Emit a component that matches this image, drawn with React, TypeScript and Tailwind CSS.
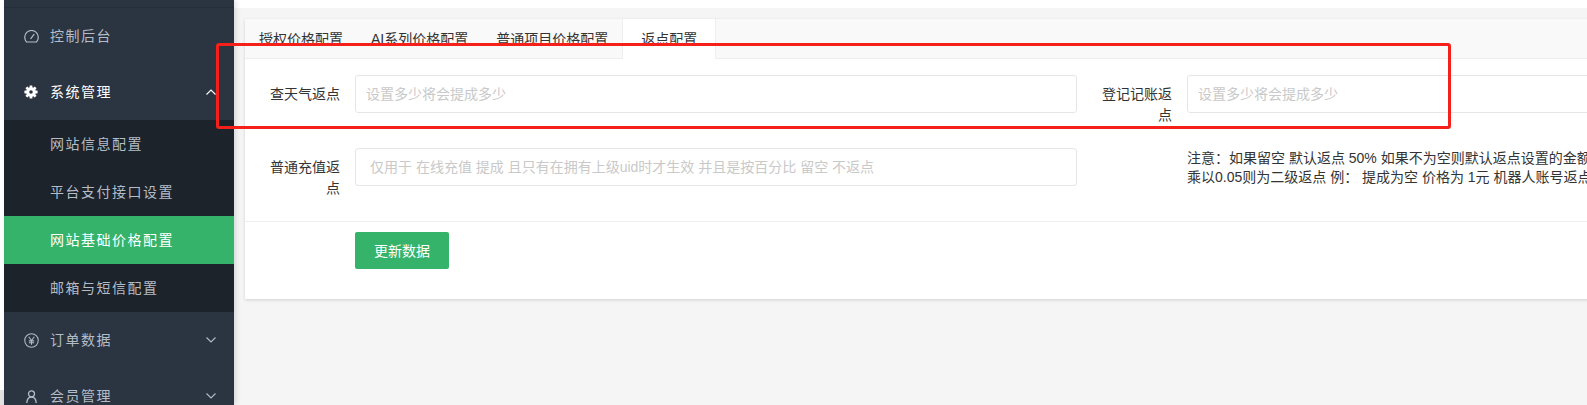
import React from "react";

const font = "font-['Liberation_Sans','Noto_Sans_CJK_SC',sans-serif]";

function Gauge() {
  return (
    <svg width="15" height="13" viewBox="0 0 15 13" fill="none" stroke="currentColor" strokeWidth="1.2" strokeLinecap="round">
      <path d="M2.6 12 A6.8 6.8 0 1 1 12.4 12 Z" />
      <path d="M6.8 8.6 L10 4.4" />
    </svg>
  );
}
function Gear() {
  const teeth = [0, 45, 90, 135, 180, 225, 270, 315];
  return (
    <svg width="14" height="14" viewBox="0 0 14 14" fill="currentColor">
      {teeth.map((a) => (
        <rect key={a} x="5.6" y="0.4" width="2.8" height="3" rx="0.4" transform={`rotate(${a} 7 7)`} />
      ))}
      <path fillRule="evenodd" d="M7 2.2a4.8 4.8 0 1 1 0 9.6a4.8 4.8 0 1 1 0-9.6ZM7 5.2a1.8 1.8 0 1 0 0 3.6a1.8 1.8 0 1 0 0-3.6Z" />
    </svg>
  );
}
function Yen() {
  return (
    <svg width="15" height="15" viewBox="0 0 16 16" fill="none" stroke="currentColor" strokeWidth="1.1">
      <circle cx="8" cy="8" r="7.2" />
      <path d="M5 4 L8 8 L11 4 M8 8 V12.5 M5.2 8.4 H10.8 M5.2 10.4 H10.8" />
    </svg>
  );
}
function UserIcon() {
  return (
    <svg width="11" height="13" viewBox="0 0 11 13" fill="none" stroke="currentColor" strokeWidth="1.3">
      <circle cx="5.5" cy="3.8" r="3" />
      <path d="M0.8 13 C1 9.5 2.6 7 5.5 7 C8.4 7 10 9.5 10.2 13" />
    </svg>
  );
}
function Chevron({ up }: { up?: boolean }) {
  return (
    <svg width="10" height="6" viewBox="0 0 10 6" fill="none" stroke="currentColor" strokeWidth="1.1" className="ml-auto">
      <path d={up ? "M0.5 5.5 L5 1 L9.5 5.5" : "M0.5 0.5 L5 5 L9.5 0.5"} />
    </svg>
  );
}

function MainItem({ icon, label, up, active, noArrow }: { icon: React.ReactNode; label: string; up?: boolean; active?: boolean; noArrow?: boolean }) {
  return (
    <div className={`h-14 flex items-center pl-4 pr-[18px] text-sm tracking-[1.5px] ${active ? "text-white" : "text-[#b4bcc8]"}`}>
      <span className="w-[22px] mr-2 flex justify-center shrink-0">{icon}</span>
      <span>{label}</span>
      {!noArrow && <Chevron up={up} />}
    </div>
  );
}
function SubItem({ label, active }: { label: string; active?: boolean }) {
  return (
    <div className={`h-12 flex items-center pl-[46px] text-sm tracking-[1.5px] ${active ? "bg-[#36b36b] text-white" : "text-[#b4bcc8]"}`}>
      {label}
    </div>
  );
}

function Label({ children }: { children: React.ReactNode }) {
  return (
    <label className="w-[80px] ml-[15px] mr-[15px] shrink-0 text-right text-sm leading-[21px] text-[#333] pt-[9px]">{children}</label>
  );
}
function Field({ placeholder, wide }: { placeholder: string; wide?: boolean }) {
  return (
    <input
      readOnly
      placeholder={placeholder}
      className={`w-[722px] h-[38px] shrink-0 border border-[#e6e6e6] rounded-[3px] bg-white pr-[10px] text-sm placeholder:text-[#c9c9c9] outline-none ${wide ? "pl-[14px]" : "pl-[10px]"}`}
    />
  );
}

export default function App() {
  return (
    <div className={`${font} w-[1587px] h-[405px] overflow-hidden flex bg-white`}>
      <div className="w-1 shrink-0 flex flex-col">
        <div className="flex-1 bg-white" />
        <div className="h-[15px] bg-[#e2e2e2]" />
      </div>
      <aside className="w-[230px] shrink-0 h-full bg-[#2b3541] overflow-hidden relative z-10 shadow-[2px_0_5px_rgba(0,0,0,0.12)]">
        <div className="h-2 border-b border-[#252e38]" />
        <MainItem icon={<Gauge />} label="控制后台" noArrow />
        <MainItem icon={<Gear />} label="系统管理" up active />
        <div className="bg-[#1c232b]">
          <SubItem label="网站信息配置" />
          <SubItem label="平台支付接口设置" />
          <SubItem label="网站基础价格配置" active />
          <SubItem label="邮箱与短信配置" />
        </div>
        <MainItem icon={<Yen />} label="订单数据" />
        <MainItem icon={<UserIcon />} label="会员管理" />
      </aside>
      <main className="flex-1 min-w-0 bg-[#f5f5f5]">
        <div className="h-2 bg-white" />
        <div className="mt-[11px] ml-[11px] w-[1700px] h-[280px] bg-white shadow-[0_1px_3px_rgba(0,0,0,0.15)]">
          <div className="h-10 flex bg-[#f9f9f9] border-b border-[#eeeeee] text-sm text-[#333]">
            <div className="px-[14px] flex items-center">授权价格配置</div>
            <div className="px-[14px] flex items-center">AI系列价格配置</div>
            <div className="px-[14px] flex items-center">普通项目价格配置</div>
            <div className="w-[94px] h-10 flex items-center justify-center bg-white border-x border-[#eeeeee]">返点配置</div>
          </div>
          <div className="pt-4 flex">
            <Label>查天气返点</Label>
            <Field placeholder="设置多少将会提成多少" />
            <Label>登记记账返点</Label>
            <Field placeholder="设置多少将会提成多少" />
          </div>
          <div className="pt-[22px] flex">
            <Label>普通充值返点</Label>
            <Field wide placeholder="仅用于 在线充值 提成 且只有在拥有上级uid时才生效 并且是按百分比 留空 不返点" />
            <div className="w-[110px] shrink-0" />
            <p className="w-[722px] text-sm leading-[19px] text-[#333] pt-[1px]">
              注意：如果留空 默认返点 50% 如果不为空则默认返点设置的金额
              <br />
              乘以0.05则为二级返点 例： 提成为空 价格为 1元 机器人账号返点
            </p>
          </div>
          <div className="mt-[22px] border-t border-[#eeeeee] pt-[10px] pl-[110px]">
            <button className="w-[94px] h-[37px] bg-[#36b36b] rounded-[2px] text-white text-sm">更新数据</button>
          </div>
        </div>
      </main>
      <div className="fixed left-[216px] top-[43px] w-[1235px] h-[86px] border-[3px] border-[#f5201a] rounded-[3px] z-20 pointer-events-none" />
    </div>
  );
}
